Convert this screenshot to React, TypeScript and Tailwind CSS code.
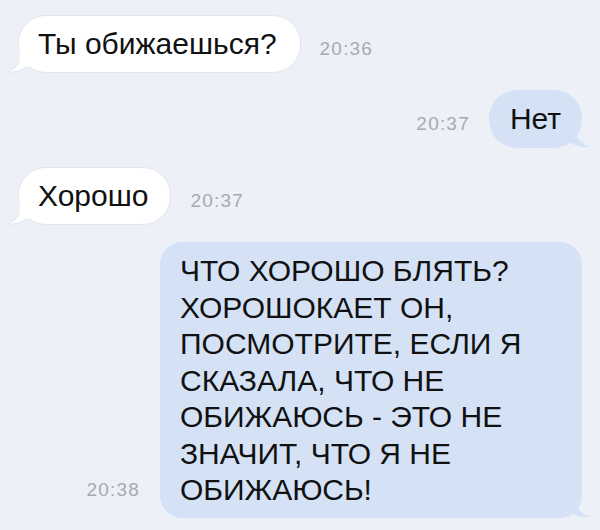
const font = { fontFamily: '"Liberation Sans", Arial, sans-serif' };

function TailLeft({ color, stroke }: { color: string; stroke?: string }) {
  return (
    <svg
      className="absolute left-[-12px] bottom-[-1px]"
      width="22"
      height="20"
      viewBox="0 0 22 20"
    >
      <path
        d="M14 0 C14 8 10 15 1 19 C8 19.5 14 18 19 14 L22 14 L22 0 Z"
        fill={color}
        stroke={stroke ?? "none"}
        strokeWidth="1"
      />
      <rect x="12.5" y="0" width="10" height="14" fill={color} />
    </svg>
  );
}

function TailRight({ color }: { color: string }) {
  return (
    <svg
      className="absolute right-[-9px] bottom-0"
      width="24"
      height="20"
      viewBox="0 0 24 20"
    >
      <path d="M8 0 C8 9 13 15 23 19 C15 20 8 18 3 14 L0 14 L0 0 Z" fill={color} />
    </svg>
  );
}

function Time({ t, mb }: { t: string; mb: string }) {
  return (
    <span className={`text-[19px] leading-none tracking-[1.2px] text-[#a6aab2] ${mb}`}>{t}</span>
  );
}

export default function App() {
  const blue = "#d5e2f6";
  return (
    <div className="w-[600px] h-[530px] bg-[#edf0f7] flex flex-col pt-[15px] overflow-hidden" style={font}>
      {/* incoming */}
      <div className="flex items-end pl-[18px]">
        <div className="relative bg-white border border-[#e1e5ec] rounded-[28px] pl-[19px] pr-[23px] py-[10px] text-[30px] leading-[36px] text-[#111]">
          <TailLeft color="#ffffff" stroke="#e1e5ec" />
          <span className="relative">Ты обижаешься?</span>
        </div>
        <div className="ml-[19px]">
          <Time t="20:36" mb="block mb-[15px]" />
        </div>
      </div>

      {/* outgoing */}
      <div className="flex items-end justify-end pr-[18px] mt-[17px]">
        <div className="mr-[19px]">
          <Time t="20:37" mb="block mb-[15px]" />
        </div>
        <div className="relative rounded-[28px] px-[21px] py-[11px] text-[30px] leading-[36px] text-[#111]" style={{ background: blue }}>
          <TailRight color={blue} />
          <span className="relative">Нет</span>
        </div>
      </div>

      {/* incoming */}
      <div className="flex items-end pl-[18px] mt-[19px]">
        <div className="relative bg-white border border-[#e1e5ec] rounded-[28px] pl-[19px] pr-[22px] py-[10px] text-[30px] leading-[36px] text-[#111]">
          <TailLeft color="#ffffff" stroke="#e1e5ec" />
          <span className="relative">Хорошо</span>
        </div>
        <div className="ml-[19px]">
          <Time t="20:37" mb="block mb-[15px]" />
        </div>
      </div>

      {/* outgoing long */}
      <div className="flex items-end justify-end pr-[18px] mt-[17px]">
        <div className="mr-[20px]">
          <Time t="20:38" mb="block mb-[19px]" />
        </div>
        <div className="relative w-[422px] rounded-[22px] pl-[20px] pt-[11px] pb-[9px] text-[30px] leading-[36.5px] text-[#111]" style={{ background: blue }}>
          <TailRight color={blue} />
          <p className="relative">
            ЧТО ХОРОШО БЛЯТЬ?
            <br />
            ХОРОШОКАЕТ ОН,
            <br />
            ПОСМОТРИТЕ, ЕСЛИ Я
            <br />
            СКАЗАЛА, ЧТО НЕ
            <br />
            ОБИЖАЮСЬ - ЭТО НЕ
            <br />
            ЗНАЧИТ, ЧТО Я НЕ
            <br />
            ОБИЖАЮСЬ!
          </p>
        </div>
      </div>
    </div>
  );
}
